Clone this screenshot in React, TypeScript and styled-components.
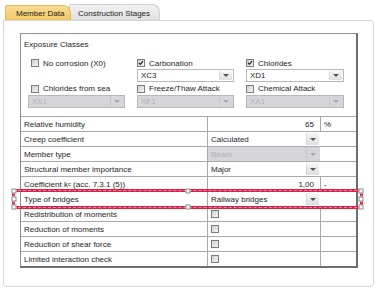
import React from "react";
import styled, { createGlobalStyle } from "styled-components";

const GlobalStyle = createGlobalStyle`
  body {
    margin: 0;
    background: #ffffff;
    font-family: "Liberation Sans", Arial, sans-serif;
    font-size: 8px;
    color: #1e1e1e;
  }
`;

const Page = styled.div`
  width: 380px;
  height: 297px;
  padding: 4px 0 0 3px;
  box-sizing: border-box;
`;

const TabBar = styled.div`
  display: flex;
  align-items: flex-end;
  height: 16px;
  padding-left: 2px;
`;

const Tab = styled.div<{ $active?: boolean }>`
  display: flex;
  align-items: center;
  box-sizing: border-box;
  height: ${(p) => (p.$active ? "15px" : "16px")};
  padding: ${(p) => (p.$active ? "1px 8px 0 10px" : "1px 8px 0 8px")};
  width: ${(p) => (p.$active ? "66px" : "91px")};
  margin-left: ${(p) => (p.$active ? "0" : "-2px")};
  z-index: ${(p) => (p.$active ? 2 : 1)};
  border: 1px solid ${(p) => (p.$active ? "#e2b95a" : "#cfcfcf")};
  border-bottom: none;
  border-radius: 2px 8px 0 0;
  background: ${(p) =>
    p.$active
      ? "linear-gradient(#f9dc92, #f2c865)"
      : "linear-gradient(#f2f2f2, #e0e0e0)"};
  color: #222;
  white-space: nowrap;
`;

const Panel = styled.div`
  width: 371px;
  height: 267px;
  box-sizing: border-box;
  border: 1px solid #d6d6d6;
  border-radius: 0 4px 4px 4px;
  padding: 12px 0 0 16px;
  background: #fff;
`;

const Box = styled.div`
  width: 338px;
  box-sizing: border-box;
  border: 1px solid #8e8e8e;
  border-right: 2px solid #6e6e6e;
  border-bottom: 2px solid #6e6e6e;
  background: #fff;
`;

const Exposure = styled.div`
  height: 82px;
  box-sizing: border-box;
  padding: 5px 0 0 3px;
`;

const SectionTitle = styled.div`
  height: 12px;
  line-height: 12px;
  margin-bottom: 6px;
`;

const ClassGrid = styled.div`
  display: grid;
  grid-template-columns: 97px 97px 98px;
  grid-template-rows: 12px 13px 13px 13px;
  column-gap: 12px;
  margin-left: 4px;
`;

const CheckLabel = styled.label<{ $inset?: boolean }>`
  display: flex;
  align-items: center;
  gap: 4px;
  padding-left: ${(p) => (p.$inset ? "3px" : "0")};
  white-space: nowrap;
`;

const CheckBox = styled.span`
  position: relative;
  display: inline-block;
  width: 8px;
  height: 8px;
  box-sizing: border-box;
  border: 1px solid #7c7c7c;
  background: linear-gradient(135deg, #cfcfcf, #f6f6f6);
  flex-shrink: 0;

  svg {
    position: absolute;
    left: 0;
    top: 0;
  }
`;

const Select = styled.div<{ $disabled?: boolean; $fill?: boolean }>`
  display: flex;
  align-items: stretch;
  box-sizing: border-box;
  height: ${(p) => (p.$fill ? "100%" : "13px")};
  border: ${(p) => (p.$fill ? "none" : "1px solid #b8b8b8")};
  background: ${(p) => (p.$disabled ? "#d6d6da" : "#fff")};
  color: ${(p) => (p.$disabled ? "#b2b2ba" : "#1e1e1e")};
`;

const SelectText = styled.span`
  flex: 1;
  display: flex;
  align-items: center;
  padding-left: 3px;
  white-space: nowrap;
  overflow: hidden;
`;

const SelectButton = styled.span<{ $disabled?: boolean }>`
  display: flex;
  align-items: center;
  justify-content: center;
  width: 12px;
  margin: 1px 1px 1px 0;
  border-left: 1px solid ${(p) => (p.$disabled ? "#c6c6ca" : "#d8d8d8")};
  background: ${(p) =>
    p.$disabled ? "#d6d6da" : "linear-gradient(#f6f6f6, #dedede)"};

  &::after {
    content: "";
    border-left: 3px solid transparent;
    border-right: 3px solid transparent;
    border-top: 3px solid ${(p) => (p.$disabled ? "#a6a6ac" : "#555")};
  }
`;

const Row = styled.div`
  position: relative;
  display: grid;
  grid-template-columns: 186px 113px 1fr;
  height: 15px;
  box-sizing: border-box;
  border-top: 1px solid #a9a9a9;
`;

const Cell = styled.div<{ $align?: "left" | "right" }>`
  display: flex;
  align-items: center;
  justify-content: ${(p) => (p.$align === "right" ? "flex-end" : "flex-start")};
  padding: ${(p) => (p.$align === "right" ? "0 6px 0 0" : "0 0 0 3px")};
  white-space: nowrap;
  overflow: hidden;

  & + & {
    border-left: 1px solid #a9a9a9;
  }
`;

const FillCell = styled.div`
  border-left: 1px solid #a9a9a9;
`;

const Selection = styled.div`
  position: absolute;
  left: -9px;
  right: -7px;
  top: -3px;
  bottom: -3px;
  z-index: 3;
  border: 3px solid #ea1f33;
  pointer-events: none;

  &::after {
    content: "";
    position: absolute;
    inset: -2px;
    border: 1px dashed #b58ce6;
  }
`;

const Handle = styled.span<{ $x: string; $y: string }>`
  position: absolute;
  left: ${(p) => p.$x};
  top: ${(p) => p.$y};
  width: 3px;
  height: 3px;
  transform: translate(-50%, -50%);
  margin-left: ${(p) => (p.$x === "0%" ? "-1px" : p.$x === "100%" ? "1px" : "0")};
  margin-top: ${(p) => (p.$y === "0%" ? "-1px" : p.$y === "100%" ? "1px" : "0")};
  background: #fff;
  border: 1px solid #8a8a8a;
  z-index: 4;
`;

const Check = ({ checked }: { checked?: boolean }) => (
  <CheckBox>
    {checked && (
      <svg width="6" height="6" viewBox="0 0 6 6">
        <path d="M1 2.8 L2.4 4.4 L5 1.2" fill="none" stroke="#222" strokeWidth="1.2" />
      </svg>
    )}
  </CheckBox>
);

const Dropdown = ({
  value,
  disabled,
  fill,
}: {
  value: string;
  disabled?: boolean;
  fill?: boolean;
}) => (
  <Select $disabled={disabled} $fill={fill}>
    <SelectText>{value}</SelectText>
    <SelectButton $disabled={disabled} />
  </Select>
);

const handles: [string, string][] = [
  ["0%", "0%"],
  ["50%", "0%"],
  ["100%", "0%"],
  ["0%", "50%"],
  ["100%", "50%"],
  ["0%", "100%"],
  ["50%", "100%"],
  ["100%", "100%"],
];

type RowData = {
  label: React.ReactNode;
  kind: "value" | "select" | "check";
  value?: string;
  unit?: string;
  disabled?: boolean;
  selected?: boolean;
};

const rows: RowData[] = [
  { label: "Relative humidity", kind: "value", value: "65", unit: "%" },
  { label: "Creep coefficient", kind: "select", value: "Calculated" },
  { label: "Member type", kind: "select", value: "Beam", disabled: true },
  { label: "Structural member importance", kind: "select", value: "Major" },
  {
    label: (
      <>
        Coefficient k<sub style={{ fontSize: "6px" }}>c</sub>&nbsp;(acc. 7.3.1 (5))
      </>
    ),
    kind: "value",
    value: "1,00",
    unit: "-",
  },
  { label: "Type of bridges", kind: "select", value: "Railway bridges", selected: true },
  { label: "Redistribution of moments", kind: "check" },
  { label: "Reduction of moments", kind: "check" },
  { label: "Reduction of shear force", kind: "check" },
  { label: "Limited interaction check", kind: "check" },
];

export default function App() {
  return (
    <Page>
      <GlobalStyle />
      <TabBar>
        <Tab $active>Member Data</Tab>
        <Tab>Construction Stages</Tab>
      </TabBar>
      <Panel>
        <Box>
          <Exposure>
            <SectionTitle>Exposure Classes</SectionTitle>
            <ClassGrid>
              <CheckLabel $inset>
                <Check /> No corrosion (X0)
              </CheckLabel>
              <CheckLabel>
                <Check checked /> Carbonation
              </CheckLabel>
              <CheckLabel>
                <Check checked /> Chlorides
              </CheckLabel>
              <span />
              <Dropdown value="XC3" />
              <Dropdown value="XD1" />
              <CheckLabel $inset>
                <Check /> Chlorides from sea
              </CheckLabel>
              <CheckLabel>
                <Check /> Freeze/Thaw Attack
              </CheckLabel>
              <CheckLabel>
                <Check /> Chemical Attack
              </CheckLabel>
              <Dropdown value="XS1" disabled />
              <Dropdown value="XF1" disabled />
              <Dropdown value="XA1" disabled />
            </ClassGrid>
          </Exposure>
          {rows.map((r, i) => (
            <Row key={i}>
              <Cell>{r.label}</Cell>
              {r.kind === "value" && <Cell $align="right">{r.value}</Cell>}
              {r.kind === "select" && (
                <FillCell>
                  <Dropdown value={r.value!} disabled={r.disabled} fill />
                </FillCell>
              )}
              {r.kind === "check" && (
                <Cell>
                  <Check />
                </Cell>
              )}
              <Cell>{r.unit}</Cell>
              {r.selected && (
                <Selection>
                  {handles.map(([x, y]) => (
                    <Handle key={x + y} $x={x} $y={y} />
                  ))}
                </Selection>
              )}
            </Row>
          ))}
        </Box>
      </Panel>
    </Page>
  );
}
